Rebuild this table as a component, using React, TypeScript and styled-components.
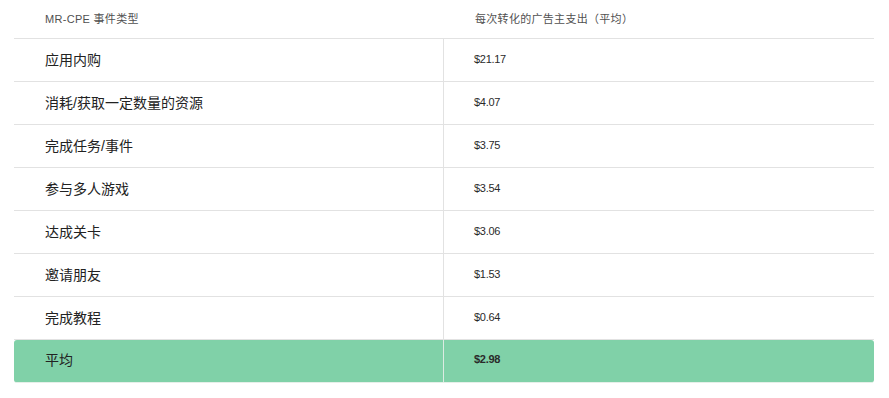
import React from "react";
import styled, { createGlobalStyle } from "styled-components";

const GlobalStyle = createGlobalStyle`
    body {
        margin: 0;
        background: #ffffff;
        font-family: "Liberation Sans", "Noto Sans CJK SC", sans-serif;
    }
`;

const rows = [
    { name: "应用内购", cost: "$21.17" },
    { name: "消耗/获取一定数量的资源", cost: "$4.07" },
    { name: "完成任务/事件", cost: "$3.75" },
    { name: "参与多人游戏", cost: "$3.54" },
    { name: "达成关卡", cost: "$3.06" },
    { name: "邀请朋友", cost: "$1.53" },
    { name: "完成教程", cost: "$0.64" },
];

function App() {
    return (
        <>
            <GlobalStyle />
            <Wrapper>
                <Table>
                    <HeaderRow>
                        <HeaderCell>MR-CPE 事件类型</HeaderCell>
                        <HeaderCell>每次转化的广告主支出（平均）</HeaderCell>
                    </HeaderRow>
                    {rows.map((row) => (
                        <Row key={row.name}>
                            <NameCell>{row.name}</NameCell>
                            <CostCell>{row.cost}</CostCell>
                        </Row>
                    ))}
                    <TotalRow>
                        <NameCell $lift={4}>平均</NameCell>
                        <CostCell $lift={4} $bold>$2.98</CostCell>
                    </TotalRow>
                </Table>
            </Wrapper>
        </>
    );
}

export default App;

const Wrapper = styled.div`
    width: 889px;
    height: 398px;
    padding: 0 15px 0 14px;
    box-sizing: border-box;
`;

const Table = styled.div`
    display: flex;
    flex-direction: column;
    width: 860px;
`;

const HeaderRow = styled.div`
    display: grid;
    grid-template-columns: 430px 430px;
    height: 39px;
    border-bottom: 1px solid #e2e2e2;
    box-sizing: border-box;
`;

const HeaderCell = styled.div`
    display: flex;
    align-items: center;
    padding: 0 0 2px 31px;
    font-size: 11px;
    color: #505050;
    letter-spacing: 0.3px;
`;

const Row = styled.div`
    display: grid;
    grid-template-columns: 430px 430px;
    height: 43px;
    box-sizing: border-box;
    border-bottom: 1px solid #e2e2e2;

    & > div:first-child {
        border-right: 1px solid #e2e2e2;
    }
`;

const TotalRow = styled(Row)`
    background: #80d1a8;
    border-radius: 3px;
    border-bottom: 1px solid #e6efe9;

    & > div:first-child {
        border-right: 1px solid #dcebe2;
    }
`;

const NameCell = styled.div<{ $lift?: number }>`
    display: flex;
    align-items: center;
    padding-left: 31px;
    padding-bottom: ${(p) => p.$lift ?? 2}px;
    font-size: 14px;
    color: #222222;
`;

const CostCell = styled.div<{ $bold?: boolean; $lift?: number }>`
    display: flex;
    align-items: center;
    padding-left: 30px;
    padding-bottom: ${(p) => p.$lift ?? 2}px;
    font-size: 11px;
    color: #2a2a2a;
    font-weight: ${(p) => (p.$bold ? 600 : 400)};
    letter-spacing: -0.3px;
`;
